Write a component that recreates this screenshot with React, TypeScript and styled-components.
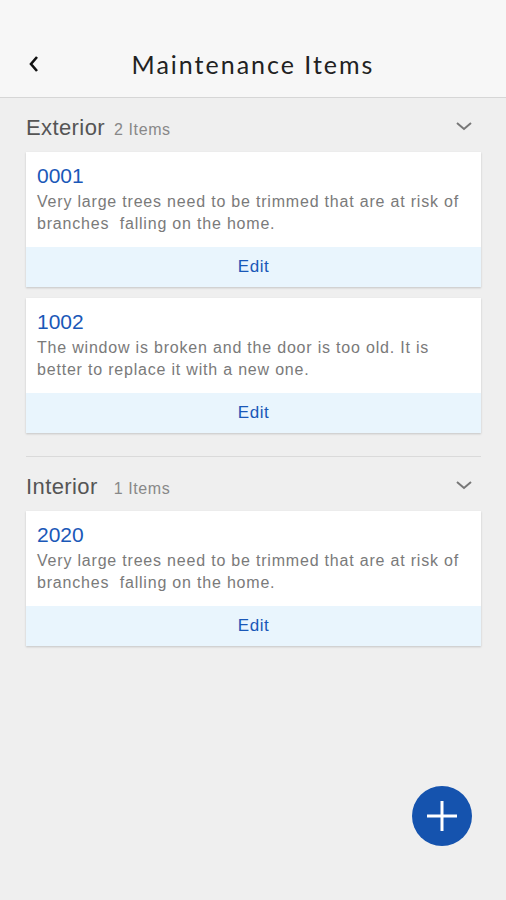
import React from "react";
import styled, { createGlobalStyle } from "styled-components";

const GlobalStyle = createGlobalStyle`
  html, body {
    margin: 0;
    padding: 0;
    background: #efefef;
  }
`;

export const Page = styled.div`
  position: relative;
  width: 506px;
  min-height: 900px;
  background: #efefef;
  font-family: "Liberation Sans", Arial, sans-serif;
`;

export const Header = styled.div`
  position: relative;
  height: 67px;
  padding-top: 30px;
  display: flex;
  align-items: center;
  justify-content: center;
  background: #f7f7f7;
  border-bottom: 1px solid #d6d6d6;
`;

export const BackButton = styled.div`
  position: absolute;
  left: 24px;
  top: 52px;
  width: 20px;
  height: 24px;
  display: flex;
  align-items: center;
  justify-content: center;
`;

export const Title = styled.div`
  font-family: "Lato", "Noto Sans", sans-serif;
  font-size: 25px;
  letter-spacing: 2px;
  color: #222;
`;

export const Content = styled.div`
  padding: 0 25px 0 26px;
`;

export const SectionHeader = styled.div`
  display: flex;
  align-items: center;
  height: 24px;
  padding: 18px 0 12px;
`;

export const SectionName = styled.span`
  font-size: 22px;
  letter-spacing: 0.4px;
  color: #555;
`;

export const SectionCount = styled.span<{ $gap: number }>`
  font-size: 16px;
  letter-spacing: 0.6px;
  color: #888;
  margin-left: ${(p) => p.$gap}px;
  margin-top: 3px;
`;

export const Chevron = styled.div`
  margin-left: auto;
  margin-right: 8px;
  display: flex;
  margin-top: -4px;
`;

export const Cards = styled.div`
  display: flex;
  flex-direction: column;
  gap: 11px;
`;

export const Card = styled.div`
  background: #fff;
  box-shadow: 0 1px 2px rgba(0, 0, 0, 0.18);
`;

export const CardBody = styled.div`
  padding: 12px 11px;
`;

export const CardTitle = styled.div`
  font-size: 21px;
  line-height: 24px;
  color: #1a58b8;
`;

export const CardText = styled.div`
  margin-top: 3px;
  font-size: 16px;
  letter-spacing: 0.8px;
  line-height: 22px;
  color: #7a7a7a;
  white-space: pre-wrap;
`;

export const EditBar = styled.div`
  height: 40px;
  display: flex;
  align-items: center;
  justify-content: center;
  background: #e9f5fd;
  color: #1a58b8;
  font-size: 17px;
  letter-spacing: 0.5px;
`;

export const Divider = styled.div`
  margin-top: 23px;
  height: 1px;
  background: #dadada;
`;

export const Fab = styled.div`
  position: absolute;
  left: 412px;
  top: 786px;
  width: 60px;
  height: 60px;
  border-radius: 50%;
  background: #1553ae;
  display: flex;
  align-items: center;
  justify-content: center;
`;

const items = {
  exterior: [
    {
      id: "0001",
      text: "Very large trees need to be trimmed that are at risk of branches  falling on the home.",
    },
    {
      id: "1002",
      text: "The window is broken and the door is too old. It is better to replace it with a new one.",
    },
  ],
  interior: [
    {
      id: "2020",
      text: "Very large trees need to be trimmed that are at risk of branches  falling on the home.",
    },
  ],
};

function ChevronDown() {
  return (
    <svg width="18" height="10" viewBox="0 0 18 10">
      <path d="M2 2 L9 8 L16 2" fill="none" stroke="#777" strokeWidth="2" />
    </svg>
  );
}

function ItemCard({ id, text }: { id: string; text: string }) {
  return (
    <Card>
      <CardBody>
        <CardTitle>{id}</CardTitle>
        <CardText>{text}</CardText>
      </CardBody>
      <EditBar>Edit</EditBar>
    </Card>
  );
}

export default function App() {
  return (
    <Page>
      <GlobalStyle />
      <Header>
        <BackButton>
          <svg width="12" height="18" viewBox="0 0 12 18">
            <path d="M9 2 L3 9 L9 16" fill="none" stroke="#111" strokeWidth="2.6" />
          </svg>
        </BackButton>
        <Title>Maintenance Items</Title>
      </Header>
      <Content>
        <SectionHeader>
          <SectionName>Exterior</SectionName>
          <SectionCount $gap={9}>2 Items</SectionCount>
          <Chevron>
            <ChevronDown />
          </Chevron>
        </SectionHeader>
        <Cards>
          {items.exterior.map((it) => (
            <ItemCard key={it.id} {...it} />
          ))}
        </Cards>
        <Divider />
        <SectionHeader>
          <SectionName>Interior</SectionName>
          <SectionCount $gap={16}>1 Items</SectionCount>
          <Chevron>
            <ChevronDown />
          </Chevron>
        </SectionHeader>
        <Cards>
          {items.interior.map((it) => (
            <ItemCard key={it.id} {...it} />
          ))}
        </Cards>
      </Content>
      <Fab>
        <svg width="34" height="34" viewBox="0 0 34 34">
          <path d="M17 2 V32 M2 17 H32" stroke="#fff" strokeWidth="3" />
        </svg>
      </Fab>
    </Page>
  );
}
